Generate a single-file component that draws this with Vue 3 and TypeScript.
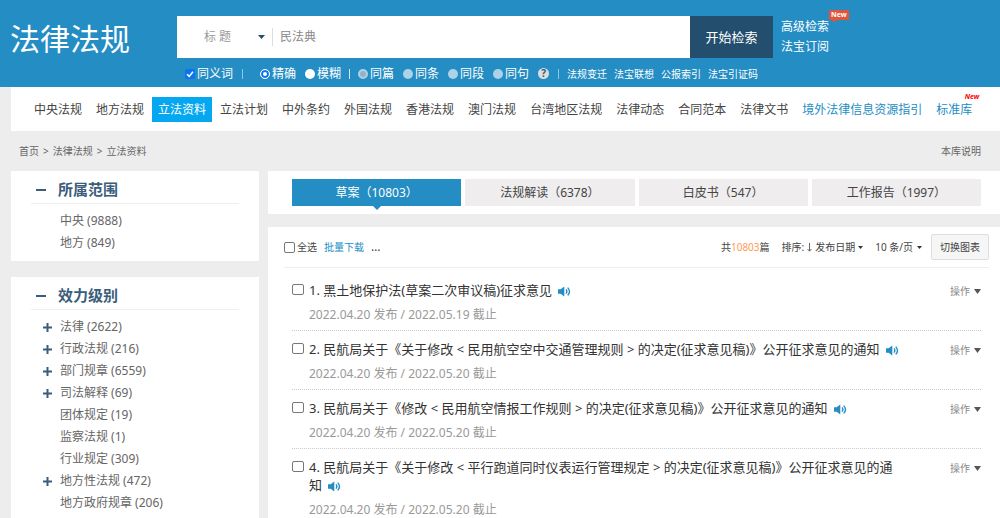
<script setup lang="ts">
import { ref } from 'vue'

interface NavItem { label: string; active?: boolean; accent?: boolean; isNew?: boolean }
interface Facet { name: string; count: number; expandable?: boolean }
interface FacetGroup { title: string; items: Facet[] }
interface Tab { label: string; count: number }
interface Result { title: string; issued: string; due: string }

const keyword = ref('民法典')
const field = ref('title')
const synonym = ref(true)
const matchMode = ref('exact')
const activeTab = ref(0)

const scopes: string[] = ['同篇', '同条', '同段', '同句']
const tools: string[] = ['法规变迁', '法宝联想', '公报索引', '法宝引证码']

const nav: NavItem[] = [
  { label: '中央法规' },
  { label: '地方法规' },
  { label: '立法资料', active: true },
  { label: '立法计划' },
  { label: '中外条约' },
  { label: '外国法规' },
  { label: '香港法规' },
  { label: '澳门法规' },
  { label: '台湾地区法规' },
  { label: '法律动态' },
  { label: '合同范本' },
  { label: '法律文书' },
  { label: '境外法律信息资源指引', accent: true },
  { label: '标准库', accent: true, isNew: true },
]

const groups: FacetGroup[] = [
  {
    title: '所属范围',
    items: [
      { name: '中央', count: 9888 },
      { name: '地方', count: 849 },
    ],
  },
  {
    title: '效力级别',
    items: [
      { name: '法律', count: 2622, expandable: true },
      { name: '行政法规', count: 216, expandable: true },
      { name: '部门规章', count: 6559, expandable: true },
      { name: '司法解释', count: 69, expandable: true },
      { name: '团体规定', count: 19 },
      { name: '监察法规', count: 1 },
      { name: '行业规定', count: 309 },
      { name: '地方性法规', count: 472, expandable: true },
      { name: '地方政府规章', count: 206 },
    ],
  },
]

const tabs: Tab[] = [
  { label: '草案', count: 10803 },
  { label: '法规解读', count: 6378 },
  { label: '白皮书', count: 547 },
  { label: '工作报告', count: 1997 },
]

const results: Result[] = [
  { title: '黑土地保护法(草案二次审议稿)征求意见', issued: '2022.04.20', due: '2022.05.19' },
  { title: '民航局关于《关于修改 < 民用航空空中交通管理规则 > 的决定(征求意见稿)》公开征求意见的通知', issued: '2022.04.20', due: '2022.05.20' },
  { title: '民航局关于《修改 < 民用航空情报工作规则 > 的决定(征求意见稿)》公开征求意见的通知', issued: '2022.04.20', due: '2022.05.20' },
  { title: '民航局关于《关于修改 < 平行跑道同时仪表运行管理规定 > 的决定(征求意见稿)》公开征求意见的通知', issued: '2022.04.20', due: '2022.05.20' },
]
</script>

<template>
  <div class="page">
    <header class="top">
      <h1 class="logo">法律法规</h1>
      <form class="search" @submit.prevent>
        <div class="bar">
          <div class="field">
            <select v-model="field" aria-label="检索字段">
              <option value="title">标 题</option>
              <option value="full">全 文</option>
            </select>
            <svg class="field-caret" width="7" height="4" viewBox="0 0 7 4"><path d="M0 0h7L3.500 4z" fill="#244e6d" /></svg>
          </div>
          <input v-model="keyword" class="keyword" type="text" aria-label="检索词" />
          <button class="submit" type="submit">开始检索</button>
        </div>
        <div class="options">
          <label class="opt"><input v-model="synonym" type="checkbox" />同义词</label>
          <i class="bar-sep"></i>
          <label class="opt wide"><input v-model="matchMode" type="radio" name="mode" value="exact" />精确</label>
          <label class="opt"><input v-model="matchMode" type="radio" name="mode" value="fuzzy" />模糊</label>
          <i class="bar-sep strong"></i>
          <label v-for="(s, i) in scopes" :key="s" class="opt">
            <input type="radio" name="scope" :checked="i === 0" disabled />{{ s }}
          </label>
          <button class="help" type="button" aria-label="帮助">?</button>
          <i class="bar-sep"></i>
          <a v-for="t in tools" :key="t" class="tool" href="#">{{ t }}</a>
        </div>
      </form>
      <div class="extra">
        <a href="#">高级检索<span class="badge">New</span></a>
        <a href="#">法宝订阅</a>
      </div>
    </header>

    <nav class="nav">
      <a v-for="n in nav" :key="n.label" href="#" :class="{ active: n.active, accent: n.accent }">
        {{ n.label }}<sup v-if="n.isNew">New</sup>
      </a>
    </nav>

    <div class="crumbs">
      <div class="trail">
        <a href="#">首页</a><span>&gt;</span><a href="#">法律法规</a><span>&gt;</span><a href="#">立法资料</a>
      </div>
      <a href="#">本库说明</a>
    </div>

    <div class="body">
      <aside class="side">
        <section v-for="g in groups" :key="g.title" class="panel facet">
          <h2>
            <svg width="10" height="10" viewBox="0 0 10 10"><path d="M0 5h10" stroke="#3a5d7c" stroke-width="2" /></svg>
            {{ g.title }}
          </h2>
          <ul>
            <li v-for="f in g.items" :key="f.name">
              <svg width="9" height="9" viewBox="0 0 9 9">
                <path v-if="f.expandable" d="M0 4.500h9M4.500 0v9" stroke="#3a5d7c" stroke-width="2" />
              </svg>
              <a href="#">{{ f.name }} ({{ f.count }})</a>
            </li>
          </ul>
        </section>
      </aside>

      <main class="main">
        <div class="panel tabs">
          <button v-for="(t, i) in tabs" :key="t.label" type="button" :class="{ on: i === activeTab }" @click="activeTab = i">
            {{ t.label }}（{{ t.count }}）
          </button>
        </div>

        <section class="panel list">
          <div class="toolbar">
            <label class="all"><input type="checkbox" />全选</label>
            <a class="batch" href="#">批量下载</a>
            <button class="more" type="button">…</button>
            <span class="total">共<b>10803</b>篇</span>
            <button class="drop sort" type="button">
              排序:
              <svg width="5" height="9" viewBox="0 0 5 9"><path d="M2.500 0v8M.5 6l2 2.200L4.500 6" fill="none" stroke="#666" /></svg>
              发布日期
              <svg width="5" height="3" viewBox="0 0 5 3"><path d="M0 0h5L2.500 3z" fill="#333" /></svg>
            </button>
            <button class="drop" type="button">
              10 条/页
              <svg width="5" height="3" viewBox="0 0 5 3"><path d="M0 0h5L2.500 3z" fill="#333" /></svg>
            </button>
            <button class="chart" type="button">切换图表</button>
          </div>

          <ol>
            <li v-for="(r, i) in results" :key="r.title">
              <input :id="'r' + i" type="checkbox" :aria-label="r.title" />
              <div class="text">
                <h3>
                  <a href="#">{{ i + 1 }}. {{ r.title }}</a>
                  <svg class="sound" width="13" height="11" viewBox="0 0 13 11">
                    <path d="M0 3.300h2.600L6.300.5v10L2.600 7.700H0z" fill="#238dc4" />
                    <path d="M8 3.400q1.700 2.100 0 4.200M9.700 1.600q3.600 3.900 0 7.800" fill="none" stroke="#238dc4" stroke-width="1.400" />
                  </svg>
                </h3>
                <p>{{ r.issued }} 发布 / {{ r.due }} 截止</p>
              </div>
              <button class="action" type="button">
                操作
                <svg width="7" height="5" viewBox="0 0 7 5"><path d="M0 0h7L3.500 5z" fill="#555" /></svg>
              </button>
            </li>
          </ol>
        </section>
      </main>
    </div>
  </div>
</template>

<style>
body {
  margin: 0;
  background: #ededed;
}
</style>

<style scoped>
* {
  box-sizing: border-box;
}
.page {
  display: flex;
  flex-direction: column;
  min-height: 100vh;
  font: 12px/18px "Noto Sans", "Noto Sans CJK SC", sans-serif;
  color: #444;
}
a {
  color: inherit;
  text-decoration: none;
}
button,
input,
select {
  margin: 0;
  padding: 0;
  border: 0;
  background: none;
  font: inherit;
  color: inherit;
}
h1,
h2,
h3,
p,
ul,
ol {
  margin: 0;
  padding: 0;
  list-style: none;
  font-weight: normal;
}
.panel {
  background: #fff;
}

/* checkboxes and radios */
input[type='checkbox'] {
  flex: none;
  appearance: none;
  width: 11px;
  height: 11px;
  border: 1px solid #777;
  border-radius: 2px;
  background: #fff;
}
.opt input {
  flex: none;
  appearance: none;
  width: 10px;
  height: 10px;
  border: 0;
  border-radius: 50%;
  background: #fff;
}
.opt input[type='checkbox'] {
  width: 10px;
  height: 10px;
  border: 0;
  border-radius: 2px;
}
.opt input[type='checkbox']:checked {
  background: #0a74f5 url("data:image/svg+xml,%3Csvg xmlns='http://www.w3.org/2000/svg' viewBox='0 0 10 10'%3E%3Cpath d='M2 5.200l2.200 2.200L8 2.800' fill='none' stroke='%23fff' stroke-width='1.600'/%3E%3C/svg%3E");
}
.opt input[type='radio']:checked {
  border: 1px solid #fff;
  box-shadow: inset 0 0 0 2px #0a74f5;
}
.opt input[type='radio']:disabled {
  border: 0;
  background: #acd2e8;
  box-shadow: none;
}
.opt input[type='radio']:disabled:checked {
  border: 2px solid #acd2e8;
  background: #93b2c4;
}

/* header */
.top {
  display: flex;
  height: 87px;
  padding-top: 16px;
  background: #238dc4;
  color: #fff;
}
.logo {
  flex: none;
  width: 177px;
  padding-left: 10px;
  font-size: 30px;
  line-height: 46px;
}
.search {
  flex: 1;
  min-width: 0;
}
.bar {
  display: flex;
  height: 42px;
  background: #fff;
}
.field {
  display: flex;
  align-items: center;
  flex: none;
  width: 96px;
  height: 18px;
  margin-top: 12px;
  padding-right: 7px;
  border-right: 1px solid #ddd;
}
.field select {
  flex: 1;
  min-width: 0;
  appearance: none;
  padding-left: 27px;
  color: #999;
}
.field-caret {
  flex: none;
}
.keyword {
  flex: 1;
  min-width: 0;
  padding-left: 7px;
  color: #888;
}
.submit {
  flex: none;
  width: 83px;
  background: #244e6d;
  font-size: 13px;
}
.options {
  display: flex;
  align-items: center;
  gap: 9px;
  height: 31px;
  padding-left: 8px;
  white-space: nowrap;
}
.opt {
  display: flex;
  align-items: center;
  gap: 2px;
}
.opt.wide {
  margin-left: 9px;
}
.bar-sep {
  width: 1px;
  height: 10px;
  margin-right: -1px;
  background: #8cc4e2;
}
.bar-sep.strong {
  margin-left: -1px;
  background: #d5eaf5;
}
.help {
  width: 11px;
  height: 11px;
  border-radius: 50%;
  background: #ddd;
  color: #2b5f80;
  font-size: 10px;
  font-weight: bold;
  line-height: 11px;
}
.tool {
  font-size: 10px;
}
.tool + .tool {
  margin-left: -2px;
}
.extra {
  display: flex;
  flex-direction: column;
  align-items: flex-start;
  gap: 2px;
  flex: none;
  width: 227px;
  padding: 2px 0 0 8px;
}
.extra a {
  position: relative;
}
.badge {
  position: absolute;
  left: 48px;
  top: -8px;
  padding: 0 2px;
  border-radius: 1px;
  background: #e2553a;
  font-size: 7px;
  font-weight: bold;
  line-height: 10px;
}
.badge::after {
  content: '';
  position: absolute;
  left: 2px;
  top: 10px;
  border: solid transparent;
  border-width: 2px 3px 0;
  border-top-color: #e2553a;
}

/* category bar */
.nav {
  display: flex;
  align-items: center;
  gap: 2px;
  height: 44px;
  margin-left: 11px;
  padding-left: 17px;
  background: #fff;
  white-space: nowrap;
}
.nav a {
  position: relative;
  padding: 0 6px;
  line-height: 25px;
}
.nav .active {
  background: #05a8f0;
  color: #fff;
}
.nav .accent {
  color: #238dc4;
}
.nav sup {
  position: absolute;
  right: -1px;
  top: -4px;
  color: #f00;
  font-size: 7px;
  font-style: italic;
  font-weight: bold;
  line-height: 8px;
}
.crumbs {
  display: flex;
  align-items: center;
  justify-content: space-between;
  height: 40px;
  padding: 0 19px;
  color: #666;
  font-size: 10px;
}
.trail {
  display: flex;
  gap: 4px;
}

/* columns */
.body {
  display: flex;
  flex: 1;
  gap: 9px;
  padding-left: 11px;
}
.side {
  display: flex;
  flex-direction: column;
  gap: 16px;
  flex: none;
  width: 248px;
}
.facet {
  padding: 0 20px 7px;
}
.facet:last-child {
  flex: 1;
}
.facet h2 {
  display: flex;
  align-items: center;
  gap: 12px;
  padding: 5px 0 0 5px;
  border-bottom: 1px solid #eee;
  color: #3a5d7c;
  font-size: 15px;
  font-weight: bold;
  line-height: 27px;
}
.facet ul {
  padding: 6px 0 0 12px;
}
.facet li {
  display: flex;
  align-items: center;
  gap: 8px;
  color: #666;
  line-height: 22px;
}
.main {
  display: flex;
  flex-direction: column;
  gap: 13px;
  flex: 1;
  min-width: 0;
}
.tabs {
  display: flex;
  gap: 4px;
  padding: 8px 19px 8px 24px;
}
.tabs button {
  position: relative;
  flex: 1;
  background: #efedee;
  line-height: 27px;
}
.tabs .on {
  background: #238dc4;
  color: #fff;
}
.tabs .on::after {
  content: '';
  position: absolute;
  left: 50%;
  top: 100%;
  margin-left: -4px;
  border: solid transparent;
  border-width: 4px 4px 0;
  border-top-color: #238dc4;
}

/* results */
.list {
  flex: 1;
  padding: 0 11px 0 16px;
}
.toolbar {
  display: flex;
  align-items: center;
  height: 41px;
  border-bottom: 1px solid #eee;
  font-size: 10px;
  white-space: nowrap;
}
.all {
  display: flex;
  align-items: center;
  gap: 2px;
}
.batch {
  margin-left: 7px;
  color: #238dc4;
}
.more {
  margin-left: 7px;
  font-size: 12px;
}
.total {
  margin-left: auto;
}
.total b {
  color: #ff9a5a;
  font-weight: normal;
}
.drop {
  display: flex;
  align-items: center;
  gap: 4px;
  margin-left: 12px;
}
.sort {
  gap: 3px;
}
.chart {
  margin-left: 9px;
  padding: 0 8px;
  border: 1px solid #ddd;
  border-radius: 2px;
  background: #f6f6f6;
  line-height: 24px;
}
.list ol {
  padding: 4px 8px 0;
}
.list li {
  display: flex;
  align-items: flex-start;
  gap: 5px;
  padding: 9px 0 6px;
  border-bottom: 1px dotted #ccc;
}
.list li:last-child {
  border-bottom: 0;
  padding-bottom: 0;
}
.list li input {
  width: 12px;
  margin-top: 3px;
}
.text {
  flex: 1;
  min-width: 0;
}
.text h3 {
  font-size: 13px;
  color: #333;
}
.sound {
  margin-left: 6px;
  vertical-align: -2px;
}
.text p {
  padding-top: 7px;
  color: #999;
}
.action {
  display: flex;
  align-items: center;
  gap: 4px;
  flex: none;
  margin: 1px 0 0 42px;
  color: #888;
  font-size: 10px;
}
</style>
